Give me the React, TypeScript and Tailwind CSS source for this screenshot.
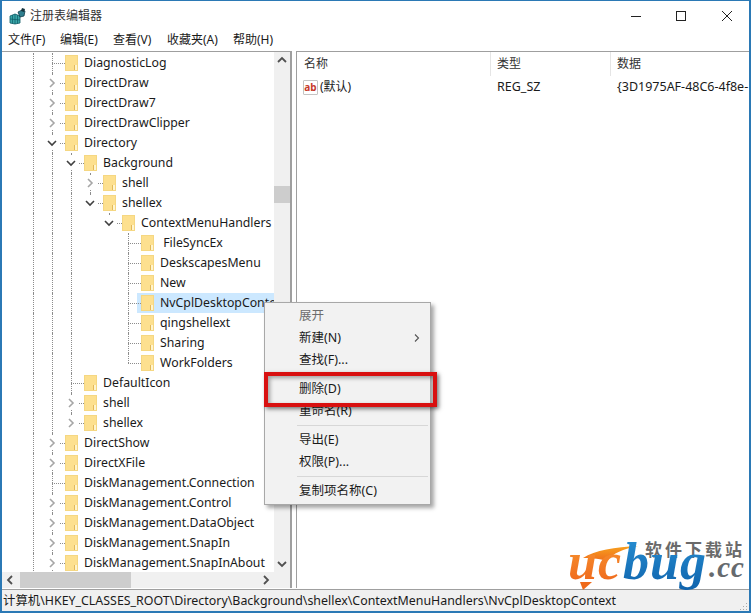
import type { ReactNode } from "react";

type Guide = "none" | "full";

type TreeRow = {
  label: string;
  level: number;
  state?: "open" | "closed";
  last?: boolean;
  selected?: boolean;
  guides: Guide[];
};

const g0: Guide[] = ["full"];
const g1: Guide[] = ["full", "full"];
const g2: Guide[] = ["full", "full", "full"];
const g3: Guide[] = ["full", "full", "full", "none"];
const g4: Guide[] = ["full", "full", "full", "none", "none"];

const rows: TreeRow[] = [
  { label: "DiagnosticLog", level: 0, guides: g0 },
  { label: "DirectDraw", level: 0, state: "closed", guides: g0 },
  { label: "DirectDraw7", level: 0, state: "closed", guides: g0 },
  { label: "DirectDrawClipper", level: 0, state: "closed", guides: g0 },
  { label: "Directory", level: 0, state: "open", guides: g0 },
  { label: "Background", level: 1, state: "open", guides: g1 },
  { label: "shell", level: 2, state: "closed", guides: g2 },
  { label: "shellex", level: 2, state: "open", last: true, guides: g2 },
  { label: "ContextMenuHandlers", level: 3, state: "open", last: true, guides: g3 },
  { label: " FileSyncEx", level: 4, guides: g4 },
  { label: "DeskscapesMenu", level: 4, guides: g4 },
  { label: "New", level: 4, guides: g4 },
  { label: "NvCplDesktopContext", level: 4, selected: true, guides: g4 },
  { label: "qingshellext", level: 4, guides: g4 },
  { label: "Sharing", level: 4, guides: g4 },
  { label: "WorkFolders", level: 4, last: true, guides: g4 },
  { label: "DefaultIcon", level: 1, guides: g1 },
  { label: "shell", level: 1, state: "closed", guides: g1 },
  { label: "shellex", level: 1, state: "closed", last: true, guides: g1 },
  { label: "DirectShow", level: 0, state: "closed", guides: g0 },
  { label: "DirectXFile", level: 0, state: "closed", guides: g0 },
  { label: "DiskManagement.Connection", level: 0, guides: g0 },
  { label: "DiskManagement.Control", level: 0, state: "closed", guides: g0 },
  { label: "DiskManagement.DataObject", level: 0, state: "closed", guides: g0 },
  { label: "DiskManagement.SnapIn", level: 0, state: "closed", guides: g0 },
  { label: "DiskManagement.SnapInAbout", level: 0, state: "closed", guides: g0 },
];

function Folder() {
  return (
    <svg width="13" height="16" viewBox="0 0 13 16" className="shrink-0">
      <rect x="0.5" y="0.5" width="12" height="15" fill="#fde08f" stroke="#f5d782" />
      <rect x="9" y="10" width="3" height="5" fill="#fff4cc" />
      <line x1="9.5" y1="10" x2="9.5" y2="15" stroke="#e3b95a" />
    </svg>
  );
}

function Chevron({ open }: { open: boolean }) {
  return (
    <svg width="12" height="12" viewBox="0 0 12 12">
      <path
        d={open ? "M2 4l4 4 4-4" : "M4 2l4 4-4 4"}
        fill="none"
        stroke={open ? "#404040" : "#a6a6a6"}
        strokeWidth="1.6"
      />
    </svg>
  );
}

function Row({ row }: { row: TreeRow }) {
  return (
    <div className="flex h-5 items-center pl-[31px]">
      {row.guides.map((guide, i) => (
        <div
          key={i}
          className={guide === "full" ? "h-5 w-[19px] shrink-0 border-l border-dotted border-[#8c8c8c]" : "h-5 w-[19px] shrink-0"}
        />
      ))}
      <div className="relative flex h-5 w-[13px] shrink-0 flex-col">
        <div className="h-[10px] border-l border-dotted border-[#8c8c8c]" />
        <div
          className={
            row.last
              ? "h-[10px] border-t border-dotted border-[#8c8c8c]"
              : "h-[10px] border-l border-t border-dotted border-[#8c8c8c]"
          }
        />
        {row.state && (
          <div className="absolute left-[-8px] top-[3px] flex h-[14px] w-[15px] items-center justify-center bg-white">
            <Chevron open={row.state === "open"} />
          </div>
        )}
      </div>
      <div
        className={
          row.selected
            ? "-ml-[4px] flex h-5 min-w-0 flex-1 items-center bg-[#cce8ff] pl-[4px]"
            : "flex h-5 min-w-0 flex-1 items-center"
        }
      >
        <Folder />
        <span className="ml-[6px] whitespace-pre text-[12.3px] text-[#1a1a1a]">{row.label}</span>
      </div>
    </div>
  );
}

function ScrollArrow({ d }: { d: string }) {
  return (
    <svg width="16" height="16" viewBox="0 0 16 16" className="shrink-0">
      <path d={d} fill="none" stroke="#505050" strokeWidth="1.8" />
    </svg>
  );
}

function MenuItem({ children, disabled, arrow }: { children: ReactNode; disabled?: boolean; arrow?: boolean }) {
  return (
    <div
      className={
        disabled
          ? "flex h-[22px] items-center justify-between pl-[34px] pr-2 text-[12.5px] text-[#6d6d6d]"
          : "flex h-[22px] items-center justify-between pl-[34px] pr-2 text-[12.5px] text-[#1a1a1a]"
      }
    >
      <span>{children}</span>
      {arrow && (
        <svg width="10" height="10" viewBox="0 0 10 10">
          <path d="M3 1.5l3.5 3.5L3 8.5" fill="none" stroke="#555" strokeWidth="1.1" />
        </svg>
      )}
    </div>
  );
}

function Separator() {
  return <div className="my-[3px] ml-[32px] mr-[2px] h-px bg-[#d7d7d7]" />;
}

export default function App() {
  return (
    <div
      className="relative flex h-[613px] w-[751px] flex-col overflow-hidden border-2 border-t border-[#2b79b5] bg-white"
      style={{ fontFamily: '"Noto Sans", "Noto Sans CJK SC", sans-serif' }}
    >
      {/* title bar */}
      <div className="flex h-[29px] shrink-0 items-center pl-[7px]">
        <svg width="18" height="18" viewBox="0 0 18 18" className="shrink-0">
          <path d="M1 9l5-2 5 2v7l-5 1-5-1z" fill="#3aa6a8" stroke="#0d5a66" strokeWidth="0.8" />
          <path d="M6 7v10M1 12l10 1M3.5 8v8.5M8.5 8v8.5" stroke="#0d5a66" strokeWidth="0.7" />
          <path d="M9 5l4-2 3 1-1 5-4 1z" fill="#2f7f8f" stroke="#103c4a" strokeWidth="0.8" />
          <path d="M13 1l3 1-1 3-3-1z" fill="#16333d" />
        </svg>
        <span className="ml-[3px] text-xs text-[#333333]">注册表编辑器</span>
        <div className="ml-auto flex items-center pr-[16px]">
          <svg width="12" height="12" viewBox="0 0 12 12" className="mr-[32px]">
            <line x1="0" y1="6.5" x2="10" y2="6.5" stroke="#222" />
          </svg>
          <svg width="12" height="12" viewBox="0 0 12 12" className="mr-[34px]">
            <rect x="1.5" y="1.5" width="9" height="9" fill="none" stroke="#222" />
          </svg>
          <svg width="12" height="12" viewBox="0 0 12 12">
            <path d="M1 1l10 10M11 1L1 11" stroke="#222" />
          </svg>
        </div>
      </div>

      {/* menu bar */}
      <div className="mb-px flex h-5 shrink-0 items-center pl-[6px] text-xs text-[#1a1a1a]">
        <span className="w-[52px]">文件(F)</span>
        <span className="w-[53px]">编辑(E)</span>
        <span className="w-[54px]">查看(V)</span>
        <span className="w-[66px]">收藏夹(A)</span>
        <span>帮助(H)</span>
      </div>

      {/* panes */}
      <div className="flex min-h-0 flex-1 pb-px">
        <div className="flex w-[290px] shrink-0 flex-col border-t border-r-2 border-[#9f9f9f]">
          <div className="flex min-h-0 flex-1">
            <div className="min-w-0 flex-1 overflow-hidden pt-px">
              {rows.map((row, i) => (
                <Row key={i} row={row} />
              ))}
            </div>
            <div className="flex w-[16px] shrink-0 flex-col bg-[#f0f0f0]">
              <ScrollArrow d="M4 10l4-4 4 4" />
              <div className="mt-[118px] h-[17px] bg-[#cdcdcd]" />
              <div className="mt-auto">
                <ScrollArrow d="M4 6l4 4 4-4" />
              </div>
            </div>
          </div>
          <div className="flex h-[16px] shrink-0 bg-[#f0f0f0]">
            <ScrollArrow d="M10 4l-4 4 4 4" />
            <div className="ml-[2px] w-[111px] bg-[#cdcdcd]" />
            <div className="ml-auto mr-[16px]">
              <ScrollArrow d="M6 4l4 4-4 4" />
            </div>
          </div>
        </div>
        <div className="ml-[4px] flex min-w-0 flex-1 flex-col overflow-hidden border-t border-l border-[#9f9f9f]">
          <div className="flex h-[24px] shrink-0 items-center text-xs text-[#333333]">
            <span className="w-[193px] pl-[7px]">名称</span>
            <span className="h-full w-px bg-[#e5e5e5]" />
            <span className="w-[119px] pl-[6px]">类型</span>
            <span className="h-full w-px bg-[#e5e5e5]" />
            <span className="pl-[6px]">数据</span>
          </div>
          <div className="flex h-[22px] items-center whitespace-nowrap text-xs text-[#1a1a1a]">
            <div className="flex w-[194px] shrink-0 items-center pl-[6px]">
              <div className="flex h-[15px] w-[15px] items-center justify-center rounded-[1px] border border-[#c4c4c4] bg-white text-[10px] font-bold leading-none text-[#c6392b]">
                ab
              </div>
              <span className="ml-[2px]">(默认)</span>
            </div>
            <span className="w-[120px] shrink-0 pl-[6px] text-[12.5px]">REG_SZ</span>
            <span className="shrink-0 pl-[6px] text-[12.5px]">{"{3D1975AF-48C6-4f8e-"}</span>
          </div>
        </div>
      </div>

      {/* status bar */}
      <div className="flex h-[22px] shrink-0 items-center border-t border-[#9f9f9f] bg-[#f0f0f0] pl-[1px] pt-px text-[12.4px] text-[#1a1a1a]">
        <span>{"计算机\\HKEY_CLASSES_ROOT\\Directory\\Background\\shellex\\ContextMenuHandlers\\NvCplDesktopContext"}</span>
        <svg width="9" height="9" viewBox="0 0 9 9" className="ml-auto mr-px self-end">
          <path d="M7 1h1v1H7zM4 4h1v1H4zM7 4h1v1H7zM1 7h1v1H1zM4 7h1v1H4zM7 7h1v1H7z" fill="#a8a8a8" />
        </svg>
      </div>

      {/* context menu */}
      <div className="absolute left-[262px] top-[301px] w-[167px] border border-[#a8a8a8] bg-[#f2f2f2] py-[2px] shadow-[3px_3px_4px_rgba(0,0,0,0.35)]">
        <MenuItem disabled>展开</MenuItem>
        <MenuItem arrow>新建(N)</MenuItem>
        <MenuItem>查找(F)...</MenuItem>
        <Separator />
        <MenuItem>删除(D)</MenuItem>
        <MenuItem>重命名(R)</MenuItem>
        <Separator />
        <MenuItem>导出(E)</MenuItem>
        <MenuItem>权限(P)...</MenuItem>
        <Separator />
        <MenuItem>复制项名称(C)</MenuItem>
      </div>

      {/* red highlight */}
      <div className="absolute left-[262px] top-[371px] h-[35px] w-[173px] border-4 border-[#d81010] shadow-[2px_2px_4px_rgba(0,0,0,0.5),inset_2px_2px_4px_rgba(0,0,0,0.35)]" />

      {/* watermark logo */}
      <div className="absolute left-[563px] top-[541px] h-[52px] w-[184px]">
        <svg width="66" height="50" viewBox="0 0 66 50" className="absolute left-[12px] top-[2px]">
          <defs>
            <linearGradient id="swoosh" x1="0" y1="0" x2="0" y2="1">
              <stop offset="0" stopColor="#f7a11f" />
              <stop offset="1" stopColor="#ef6f1a" />
            </linearGradient>
          </defs>
          <path d="M6 14C18 6 38 3 61 2 46 5 36 9 30 17 20 14 12 14 6 14z" fill="url(#swoosh)" />
          <path d="M3 38l12 0-9 8z" fill="#ef6a1a" />
        </svg>
        <div className="absolute left-[80px] top-[-3px] text-[17px] font-bold leading-[22px] tracking-[3px] text-[#6a6a6a]">
          软件下载站
        </div>
        <div
          className="absolute left-[3px] top-[-14px] flex items-baseline text-[52px] font-bold italic leading-[68px] tracking-[1px]"
          style={{ fontFamily: '"Liberation Serif", serif' }}
        >
          <span className="bg-linear-to-b from-[#f9a134] to-[#ec5a17] bg-clip-text pr-px text-transparent">uc</span>
          <span className="bg-linear-to-b from-[#2b96d8] to-[#0d5ea8] bg-clip-text pr-[2px] text-transparent">bug</span>
          <span className="-translate-y-[2px] text-[29px] text-[#666a6e]">.cc</span>
        </div>
      </div>
    </div>
  );
}
